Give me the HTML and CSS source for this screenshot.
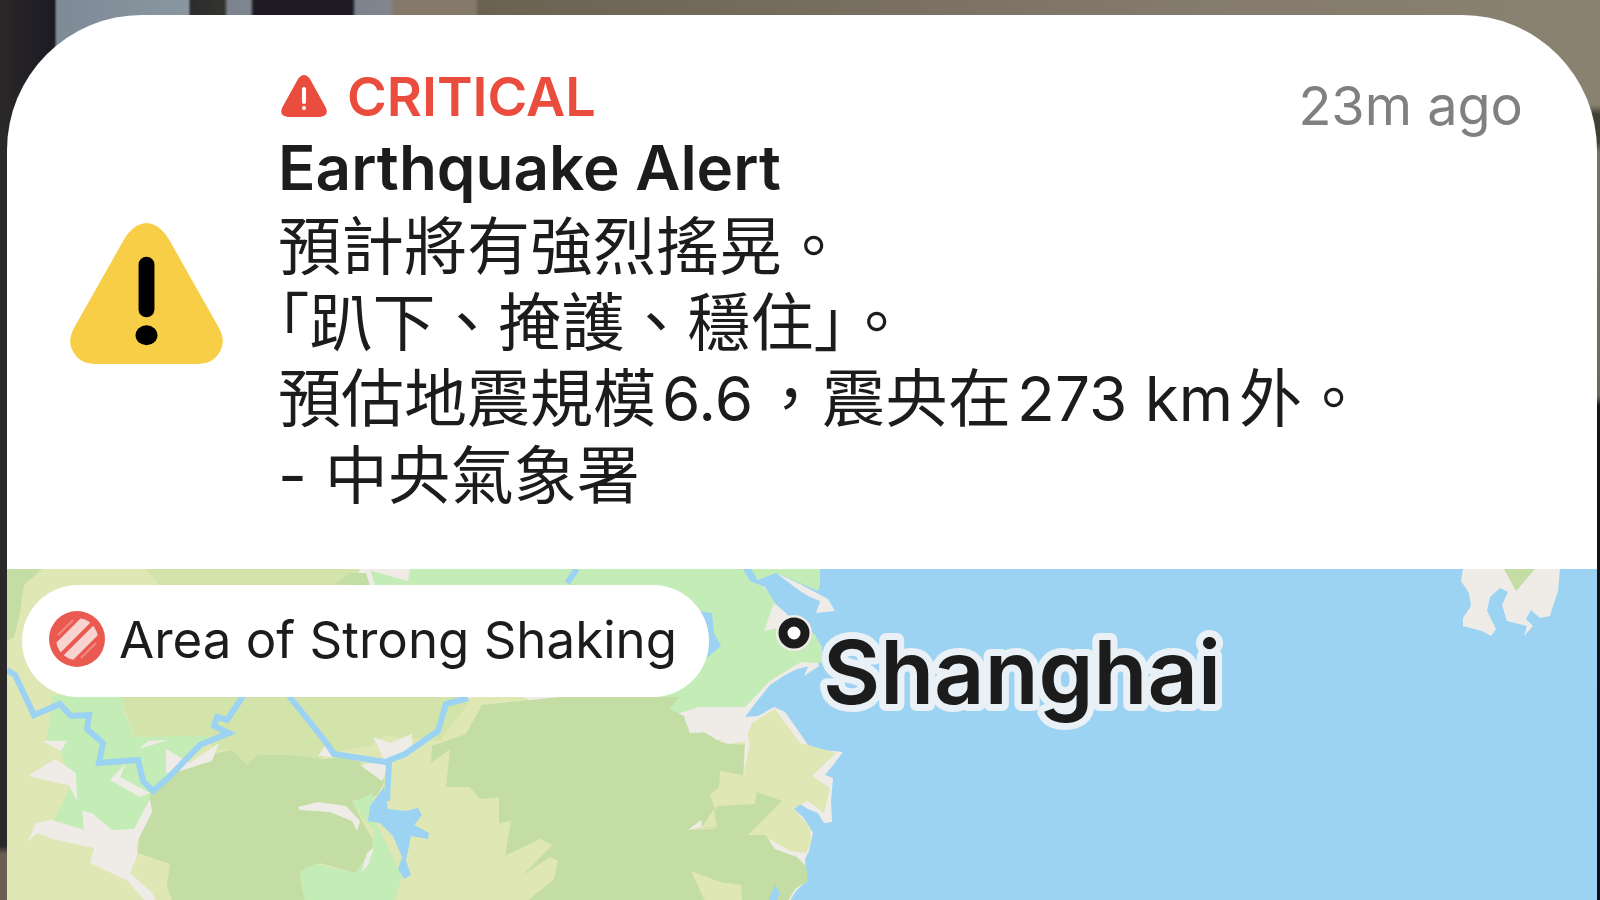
FILE: index.html
```html
<!DOCTYPE html>
<html lang="zh-Hant">

<head>
    <meta charset="UTF-8">
    <title>Earthquake Alert</title>
    <link rel="stylesheet" href="styles.css">
</head>

<body>
    <article class="notification">
        <div class="alert">
            <svg class="alert-icon" viewBox="0 0 154 142" aria-hidden="true">
                <path fill="#f7ce46" d="M58 11Q77-11 96 11Q99 15 101 19L149 104Q158 119 150 131Q143 142 129 142H25Q11 142 4 131Q-4 119 5 104L53 19Q55 15 58 11Z" />
                <rect x="69" y="34" width="16" height="61" rx="8" />
                <ellipse cx="77" cy="113" rx="11" ry="10" />
            </svg>
            <div class="alert-text">
                <div class="alert-head">
                    <p class="critical">
                        <svg class="critical-icon" viewBox="0 0 46 42" aria-hidden="true">
                            <path fill="#ea4d3d" d="M17 4Q23-4 29 4L45 33Q48 41 39 42H7Q-2 41 1 33Z" />
                            <rect x="21" y="12" width="4" height="17" rx="2" fill="#fff" />
                            <circle cx="23" cy="33" r="2" fill="#fff" />
                        </svg>
                        CRITICAL
                    </p>
                    <time class="time">23m ago</time>
                </div>
                <h1>Earthquake Alert</h1>
                <p class="message">
                    預計將有強烈搖晃。<br>
                    <span class="half">「</span>趴下、掩護、穩住<span class="half">」</span>。<br>
                    預估地震規模<span class="latin">6.6</span>，震央在<span class="latin">273 km</span>外。<br>
                    - 中央氣象署
                </p>
            </div>
        </div>
        <div class="map">
            <svg class="map-canvas" viewBox="7 568 1590 332" preserveAspectRatio="xMinYMin slice">
                <!-- sea -->
                <rect x="7" y="568" width="1590" height="332" fill="#9cd3f2" />
                <!-- land -->
                <path fill="#efece8" d="M7 568H750L768 584 775 602 797 621 815 634 822 650 818 663 797 668 785 674 770 684 757 700 745 716 758 715 774 706 785 711 797 728 808 744 822 749 843 751 834 763 825 774 833 777 831 800 832 821 824 822 818 812 808 808 800 803 794 808 803 816 813 832 809 850 805 858 807 880 796 890 790 900H7Z" />
                <!-- grassland -->
                <path fill="#dfe7b5" d="M7 568H340V720L450 700 510 690 640 750 747 735 752 722 775 708 800 742 836 752 812 775 830 787 824 812 808 800 793 807 810 826 811 842 806 852 790 850 770 838 740 900H7Z" />
                <path fill="#d3e4aa" d="M145 568L165 583 350 590 470 700 440 740 385 735 370 745 330 752 300 770 247 765 225 748 218 750 205 738 135 735 120 696 290 690Z" />
                <path fill="#d3e4aa" d="M145 568H360L350 590H165Z" />
                <!-- farmland -->
                <path fill="#c3ecb6" d="M370 568H748L762 584 778 603 790 620 820 650 796 664 770 680 745 706 725 706 700 706 672 714 660 696 670 600 380 600Z" />
                <path fill="#c3ecb6" d="M52 694H122L124 712 135 736 205 735 212 740 150 790 150 800 138 828 108 830 82 828 54 820 68 790 74 775 66 766 60 748 46 738 50 720Z" />
                <!-- forest -->
                <path fill="#c3dda4" d="M7 568H42L24 584 20 612 14 636 7 640Z M335 583L350 572H366L370 585Z" />
                <path fill="#c3dda4" d="M152 788L172 772 216 752 232 749 247 764 258 754 290 754 322 758 350 756 372 768 385 780 376 795 352 800 362 820 374 840 370 865 355 872 320 862 300 875 305 900H172L167 885 170 863 138 852 140 830Z" />
                <path fill="#c3dda4" d="M482 704L560 696H680L669 708 684 715 690 732 704 731 722 742 745 744 743 774 720 770 719 786 710 794 715 808 717 808 716 827 702 826 688 829 715 828 717 805 755 803 757 791 782 800 748 834 765 834 775 848 797 856 806 865 808 880 795 888 788 900H480L485 898 527 900 554 878 558 860 550 856 522 875 552 844 540 838 505 855 511 820 499 822 499 796 480 798 470 786 446 786 450 748 431 762 432 745 466 733Z" />
                <path fill="#c3ecb6" d="M300 870L315 863 355 872 372 848 374 830 352 802 372 792 376 822 390 850 402 874 395 900H305Z" />
                <!-- forest clearings -->
                <path fill="#dfe7b5" d="M691 870L720 881 741 884 742 900H705Z" />
                <path fill="#dfe7b5" d="M702 826L714 808 717 826Z" />
                <path fill="#dfe7b5" d="M505 855L540 838 552 844 522 875 550 856 558 860 554 878 527 900H480Z" />
                <!-- towns -->
                <path fill="#efece8" d="M42 740H67L61 750Z M28 775L55 758 76 772 77 800 69 784 58 782Z M36 822L52 819 84 829 82 810 92 812 112 829 134 828 150 798 152 811 137 841 137 855 130 872 152 892 156 900H145L128 880 90 862 94 847 52 838 38 832 28 840Z M139 748L148 740 168 739Z M166 748L190 762 219 742 212 760 180 770 166 772Z M110 779L126 762 120 776 150 792 140 796Z M298 806L318 801 346 805 360 820 357 830 352 820 330 811 300 809Z M318 755L326 743 332 756Z M373 736L390 742 412 733 412 748 390 760 382 780 360 764 385 760Z M685 718L697 706 710 712 730 706 745 714 749 740 728 743 704 731 690 732Z M745 740L750 742 744 772Z M361 872L367 852 374 846 368 864Z M365 568H410L408 580Z M688 829L701 819 702 826Z M804 675L815 650 819 665Z M774 602L764 630 782 626 790 616Z" />
                <path fill="#c3ecb6" d="M746 568H820V584L818 590 800 582 776 572 760 579Z M806 622L822 645V662L795 661 786 650Z" />
                <path fill="#efece8" d="M776 572L800 583 828 598 835 610 816 612 820 600 800 592Z" />
                <!-- rivers and lakes -->
                <path class="river" d="M7 669L15 674 34 714 60 703 71 715 89 714 87 728 103 742 99 762 138 759 143 780 153 790 169 776 200 744 229 732 214 725 217 716 227 719 243 695 M289 695L325 740 334 753 385 761 405 753 438 730 446 703 468 697 M389 761L387 800 M567 582L577 568" />
                <path fill="#9cd3f2" d="M384 786L388 808 406 810 418 807 422 814 414 824 429 832 428 838 411 835 406 860 411 874 404 878 398 868 402 856 393 835 380 822 368 820 370 805Z M698 610L712 612 714 632 721 645 708 656H698Z M743 568H751L758 579 776 572 800 590 820 602 806 622 790 616 775 602 765 586 750 580Z M768 900L775 884 780 892 777 900Z" />
                <!-- islands -->
                <path fill="#efece8" d="M1463 568H1560L1558 590 1552 608 1550 615 1540 617 1531 609 1526 618 1533 625 1524 635 1527 625 1507 620 1502 604 1508 591 1500 587 1490 596 1487 610 1496 628 1491 635 1482 630 1463 625 1463 617 1471 605 1469 592 1461 580Z" />
                <path fill="#c3dda4" d="M1504 568H1535L1516 590Z" />
                <!-- city -->
                <circle cx="794" cy="632" r="18" fill="#efece8" />
                <circle cx="794" cy="632" r="11" fill="#fff" stroke="#1c1c1c" stroke-width="9" />
                <text class="city" x="823" y="703">Shanghai</text>
            </svg>
            <div class="legend">
                <svg class="legend-icon" viewBox="0 0 56 56" aria-hidden="true">
                    <defs>
                        <clipPath id="hatch">
                            <circle cx="28" cy="28" r="21" />
                        </clipPath>
                    </defs>
                    <circle cx="28" cy="28" r="28" fill="#ea5a50" />
                    <path clip-path="url(#hatch)" stroke="#f8d3d0" stroke-width="10" d="M5 41L41 5M15 51L51 15" />
                    <path stroke="#f08a80" stroke-width="2" d="M9 24L24 9M32 47L47 32" />
                </svg>
                Area of Strong Shaking
            </div>
        </div>
    </article>
</body>

</html>
```

FILE: styles.css
```css
* {
    box-sizing: border-box;
}

body {
    margin: 0;
    min-height: 100vh;
    padding: 15px 3px 0 7px;
    display: flex;
    /* right edge, left edge, then the blurred room behind the card */
    background:
        linear-gradient(to bottom, #8a8270 105px, #3f4034 114px, #3f4034 142px, #7a7166 152px, #6f675c 396px, #141416 406px, #0c1016 100%) right / 20px 100% no-repeat,
        linear-gradient(to bottom, #2a2829 846px, #6a5d52 854px) left / 7px 100% no-repeat,
        linear-gradient(to right, #2a2829 0, #1c1a22 54px, #7d8b97 57px, #8a969f 188px, #2c2c2f 191px, #33332f 224px, #7b838e 228px, #7f8690 250px, #1e1c22 254px, #1e1c22 352px, #7b838e 356px, #82868c 390px, #85796b 394px, #85796b 475px, #6b6252 479px, #857a6e 75%, #8a8270 100%);
    font-family: Inter, "Noto Sans CJK TC", sans-serif;
    color: #1c1c1c;
}

.notification {
    flex: 1;
    display: flex;
    flex-direction: column;
    overflow: hidden;
    border-radius: 135px 135px 0 0;
    background: #fff;
}

.alert {
    display: flex;
    padding: 50px 74px 46px 63px;
}

.alert-icon {
    width: 153px;
    align-self: center;
    flex: none;
}

.alert-text {
    flex: 1;
    margin-left: 55px;
    padding-bottom: 10px;
}

.alert p,
.alert h1 {
    margin: 0;
}

.alert-head {
    display: flex;
    justify-content: space-between;
    height: 62px;
}

.critical {
    display: flex;
    align-items: center;
    gap: 20px;
    color: #ea4d3d;
    font-size: 54px;
    font-weight: 600;
}

.critical-icon {
    width: 46px;
    margin-left: 3px;
}

.alert h1 {
    font-size: 62px;
    font-weight: 600;
    line-height: 81px;
}

.message {
    font-size: 63px;
    line-height: 76px;
}

.latin {
    margin: 0 6px;
    font-size: 62px;
}

.half {
    font-feature-settings: "halt";
}

.time {
    color: #808080;
    font-size: 54px;
    line-height: 81px;
}

.map {
    flex: 1;
    position: relative;
    min-height: 320px;
    background: #9cd3f2;
}

.map-canvas {
    position: absolute;
    width: 100%;
    height: 100%;
}

.river {
    fill: none;
    stroke: #9cd3f2;
    stroke-width: 6px;
}

.city {
    font-size: 88px;
    font-weight: 600;
    fill: #1c1c1c;
    stroke: #e9f1f6;
    stroke-width: 14px;
    stroke-linejoin: round;
    paint-order: stroke;
}

.legend {
    position: absolute;
    top: 16px;
    left: 15px;
    display: flex;
    align-items: center;
    gap: 14px;
    height: 112px;
    padding: 0 32px 4px 27px;
    border-radius: 56px;
    background: #fff;
    font-size: 51px;
}

.legend-icon {
    width: 56px;
}
```
